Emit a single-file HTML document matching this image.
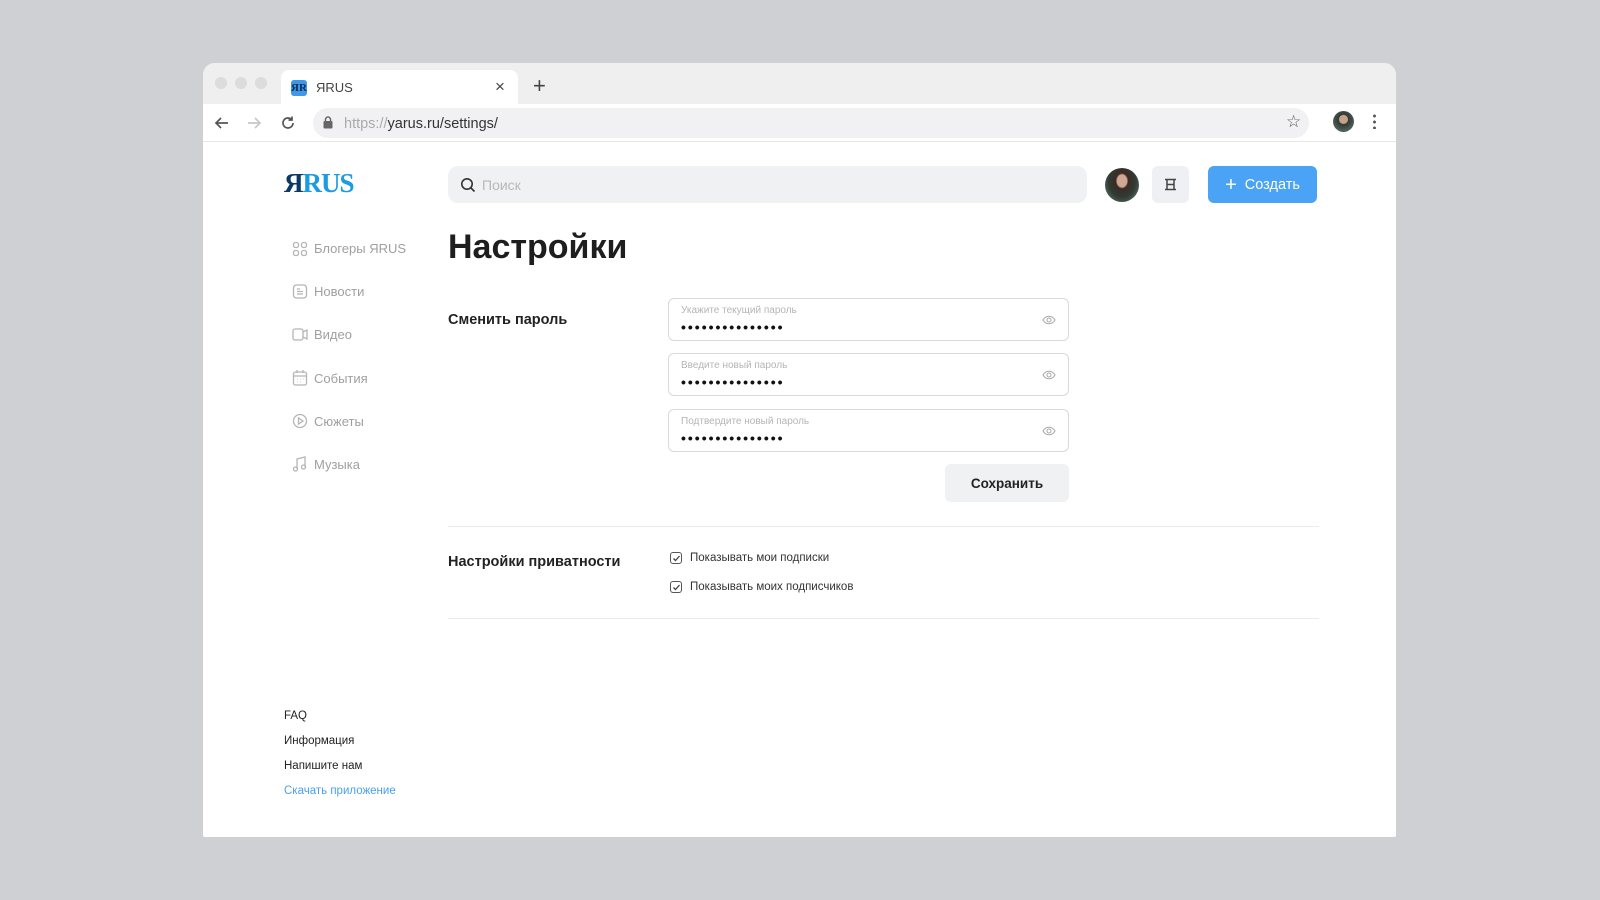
<!DOCTYPE html>
<html><head><meta charset="utf-8"><style>
*{margin:0;padding:0;box-sizing:border-box}
body{width:1600px;height:900px;background:#cfd0d4;font-family:"Liberation Sans","DejaVu Sans",sans-serif;position:relative;overflow:hidden;color:#222}
.a{position:absolute}
.win{left:203px;top:63px;width:1193px;height:774px;background:#fff;border-radius:12px 12px 2px 2px;overflow:hidden}
.tabs{left:0;top:0;width:100%;height:41px;background:#efefef}
.dot{width:12px;height:12px;border-radius:50%;background:#dcdcdc;top:14px}
.tab{left:78px;top:7px;width:237px;height:35px;background:#fff;border-radius:8px 8px 0 0}
.url{left:110px;top:45px;width:996px;height:30px;background:#f1f1f3;border-radius:15px}
.nav{font-size:13px;color:#a0a0a0;left:111px}
.inp{left:465px;width:401px;height:43px;border:1px solid #d9d9dc;border-radius:6px}
.inp .l{position:absolute;left:12px;top:6px;font-size:10px;color:#b5b5b8}
.inp .d{position:absolute;left:12px;top:20px;font-size:14px;letter-spacing:2px;color:#111;font-weight:bold}
.inp svg{position:absolute;right:12px;top:15px}
.hr{left:245px;width:871px;height:1px;background:#ececee}
.cb{width:12px;height:12px;border:1.5px solid #555;border-radius:3px}
.ft{left:81px;font-size:11.5px;color:#222}
</style></head><body>
<div class="a win">
 <div class="a tabs"></div>
 <div class="a dot" style="left:12px"></div><div class="a dot" style="left:32px"></div><div class="a dot" style="left:52px"></div>
 <div class="a tab"></div>
 <div class="a" style="left:88px;top:17px;width:16px;height:16px;background:#3f97e6;border-radius:3px;color:#0b2f5a;font:bold 11px 'Liberation Serif',serif;text-align:center;line-height:16px">ЯR</div>
 <div class="a" style="left:113px;top:17px;font-size:13px;color:#444">ЯRUS</div>
 <div class="a" style="left:292px;top:14px;font-size:17px;color:#444">×</div>
 <div class="a" style="left:330px;top:10px;font-size:22px;color:#444;font-weight:300">+</div>
 <svg class="a" style="left:10px;top:51px" width="18" height="18" viewBox="0 0 18 18" fill="none" stroke="#555" stroke-width="1.7"><path d="M15 9H3M8 4L3 9l5 5"/></svg>
 <svg class="a" style="left:42px;top:51px" width="18" height="18" viewBox="0 0 18 18" fill="none" stroke="#c8c8c8" stroke-width="1.7"><path d="M3 9h12M10 4l5 5-5 5"/></svg>
 <svg class="a" style="left:76px;top:51px" width="18" height="18" viewBox="0 0 18 18" fill="none" stroke="#555" stroke-width="1.7"><path d="M14 9a5 5 0 1 1-1.5-3.6M13 2.5v3.5H9.5"/></svg>
 <div class="a url"></div>
 <svg class="a" style="left:120px;top:53px" width="10" height="13" viewBox="0 0 10 13"><rect x="0.5" y="5" width="9" height="7.5" rx="1" fill="#666"/><path d="M2.5 5V3.5a2.5 2.5 0 0 1 5 0V5" fill="none" stroke="#666" stroke-width="1.5"/></svg>
 <div class="a" style="left:141px;top:53px;font-size:14.5px;color:#aaa">https://<span style="color:#333">yarus.ru/settings/</span></div>
 <div class="a" style="left:1083px;top:49px;font-size:17px;color:#555">☆</div>
 <div class="a" style="left:1130px;top:48px;width:21px;height:21px;border-radius:50%;background:radial-gradient(circle at 50% 40%,#c9a08a 0 25%,#2e3a34 30%,#526058 70%)"></div>
 <div class="a" style="left:1170px;top:50px;width:3px;height:16px;background:radial-gradient(circle,#555 1.3px,transparent 1.6px) 0 0/3px 6px"></div>
 <div class="a" style="left:0;top:78px;width:100%;height:1px;background:#e6e6e6"></div>

 <div class="a" style="left:81px;top:105px;font:bold 27px 'Liberation Serif',serif;letter-spacing:-1px"><span style="color:#0c3866">Я</span><span style="color:#1b9be1">RUS</span></div>
 <div class="a" style="left:245px;top:103px;width:639px;height:37px;background:#f0f1f3;border-radius:10px"></div>
 <svg class="a" style="left:257px;top:114px" width="16" height="16" viewBox="0 0 16 16" fill="none" stroke="#333" stroke-width="1.6"><circle cx="7" cy="7" r="5.2"/><path d="M11 11l3.5 3.5"/></svg>
 <div class="a" style="left:279px;top:114px;font-size:14px;color:#b8b8bb">Поиск</div>
 <div class="a" style="left:902px;top:105px;width:34px;height:34px;border-radius:50%;background:radial-gradient(ellipse at 50% 38%,#d1a894 0 20%,#3b2b25 26%,#2f3b33 55%,#53625a 80%)"></div>
 <div class="a" style="left:949px;top:103px;width:37px;height:37px;background:#eef0f3;border-radius:6px"></div>
 <svg class="a" style="left:960px;top:114px" width="15" height="15" viewBox="0 0 15 15" fill="none" stroke="#444" stroke-width="1.5"><path d="M2 2.5h11M2 12.5h11M4 2.5v10M11 2.5v10M4 7.5h7"/></svg>
 <div class="a" style="left:1005px;top:103px;width:109px;height:37px;background:#4aa3f5;border-radius:6px;color:#fff;font-size:14.5px;line-height:39px;text-align:center"><span style="font-size:20px;vertical-align:-2px;font-weight:300">+</span>&nbsp; Создать</div>

 <svg class="a" style="left:89px;top:178px" width="16" height="300" viewBox="0 0 16 300" fill="none" stroke="#b5b5b8" stroke-width="1.3">
  <rect x="1.5" y="1.5" width="5" height="5" rx="2"/><rect x="9.5" y="1.5" width="5" height="5" rx="2"/><rect x="1.5" y="9.5" width="5" height="5" rx="2"/><rect x="9.5" y="9.5" width="5" height="5" rx="2"/>
  <rect x="1.5" y="44" width="13" height="13" rx="3"/><path d="M5 48h3M5 50.5h6M5 53h6"/>
  <rect x="1" y="88" width="10" height="11" rx="2"/><path d="M11 91l4-2v9l-4-2"/>
  <rect x="1.5" y="131" width="13" height="13" rx="2"/><path d="M1.5 135h13M5 129v3M11 129v3M5 138h.5M8 138h.5M11 138h.5M5 141h.5M8 141h.5"/>
  <circle cx="8" cy="180" r="6.5"/><path d="M6.5 177v6l4.5-3z"/>
  <path d="M5 228V218l8-2v10"/><circle cx="3.5" cy="228" r="2"/><circle cx="11.5" cy="226" r="2"/>
 </svg>
 <div class="a nav" style="top:178px">Блогеры ЯRUS</div>
 <div class="a nav" style="top:221px">Новости</div>
 <div class="a nav" style="top:264px">Видео</div>
 <div class="a nav" style="top:308px">События</div>
 <div class="a nav" style="top:351px">Сюжеты</div>
 <div class="a nav" style="top:394px">Музыка</div>

 <div class="a" style="left:245px;top:165px;font-size:34px;font-weight:bold;color:#1e1e1e">Настройки</div>
 <div class="a" style="left:245px;top:249px;font-size:14.5px;font-weight:bold">Сменить пароль</div>
 <div class="a inp" style="top:235px"><div class="l">Укажите текущий пароль</div><div class="d">•••••••••••••••</div><svg width="14" height="12" viewBox="0 0 14 12" fill="none" stroke="#aaa" stroke-width="1.1"><path d="M1 6c3-5 9-5 12 0-3 5-9 5-12 0z"/><circle cx="7" cy="6" r="2"/></svg></div>
 <div class="a inp" style="top:290px"><div class="l">Введите новый пароль</div><div class="d">•••••••••••••••</div><svg width="14" height="12" viewBox="0 0 14 12" fill="none" stroke="#aaa" stroke-width="1.1"><path d="M1 6c3-5 9-5 12 0-3 5-9 5-12 0z"/><circle cx="7" cy="6" r="2"/></svg></div>
 <div class="a inp" style="top:346px"><div class="l">Подтвердите новый пароль</div><div class="d">•••••••••••••••</div><svg width="14" height="12" viewBox="0 0 14 12" fill="none" stroke="#aaa" stroke-width="1.1"><path d="M1 6c3-5 9-5 12 0-3 5-9 5-12 0z"/><circle cx="7" cy="6" r="2"/></svg></div>
 <div class="a" style="left:742px;top:401px;width:124px;height:38px;background:#f0f1f3;border-radius:6px;text-align:center;line-height:39px;font-size:13.5px;font-weight:bold;color:#222">Сохранить</div>
 <div class="a hr" style="top:463px"></div>
 <div class="a" style="left:245px;top:491px;font-size:14.5px;font-weight:bold">Настройки приватности</div>
 <div class="a cb" style="left:467px;top:489px"></div><svg class="a" style="left:469px;top:491px" width="9" height="9" viewBox="0 0 9 9" fill="none" stroke="#444" stroke-width="1.3"><path d="M1.5 4.5l2 2 4-4.5"/></svg>
 <div class="a" style="left:487px;top:489px;font-size:11.5px;color:#333">Показывать мои подписки</div>
 <div class="a cb" style="left:467px;top:518px"></div><svg class="a" style="left:469px;top:520px" width="9" height="9" viewBox="0 0 9 9" fill="none" stroke="#444" stroke-width="1.3"><path d="M1.5 4.5l2 2 4-4.5"/></svg>
 <div class="a" style="left:487px;top:518px;font-size:11.5px;color:#333">Показывать моих подписчиков</div>
 <div class="a hr" style="top:555px"></div>

 <div class="a ft" style="top:647px">FAQ</div>
 <div class="a ft" style="top:672px">Информация</div>
 <div class="a ft" style="top:697px">Напишите нам</div>
 <div class="a ft" style="top:722px;color:#4a9ff0">Скачать приложение</div>
</div>
</body></html>
